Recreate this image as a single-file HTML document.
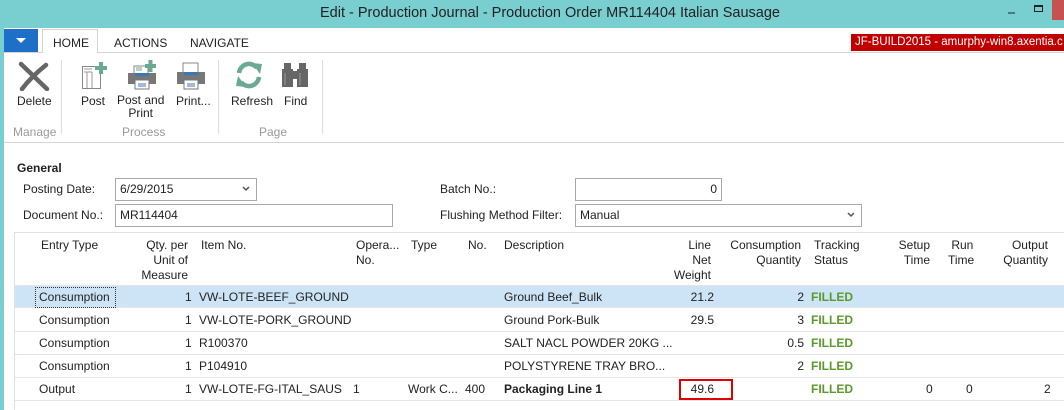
<!DOCTYPE html>
<html><head><style>
*{margin:0;padding:0;box-sizing:border-box}
body{width:1064px;height:410px;overflow:hidden;background:#79cfd0;font-family:"Liberation Sans",sans-serif;font-size:12px;color:#222;position:relative}
.a{position:absolute;white-space:nowrap}
.win{position:absolute;left:4px;top:28px;width:1060px;height:382px;background:#fff}
.inp{position:absolute;border:1px solid #a9a9a9;background:#fff;height:23px;padding:3px 4px;font-size:12px}
.chev{position:absolute;right:6px;top:7px}
.row{position:absolute;left:15px;width:1049px;height:23px;border-bottom:1px solid #e4e4e4}
.g{color:#5a9a2a;font-weight:bold}
.r{text-align:right}
</style></head><body>
<div class="a" style="left:317px;top:5px;width:466px;text-align:center;font-size:14.5px;color:#222">Edit - Production Journal - Production Order MR114404 Italian Sausage</div>
<div class="a" style="left:1008px;top:12px;width:7px;height:2px;background:#4a7b7c"></div>
<div class="a" style="left:1034px;top:5px;width:9px;height:7px;border:1px solid #222;border-top-width:2px"></div>
<div class="a" style="left:1052px;top:0;width:12px;height:20px;background:#c75050"></div>
<div class="win"></div>
<div class="a" style="left:4px;top:29px;width:34px;height:23px;background:#1d6fc8"></div>
<div class="a" style="left:16px;top:38px;width:0;height:0;border-left:5px solid transparent;border-right:5px solid transparent;border-top:5px solid #fff"></div>
<div class="a" style="left:4px;top:52px;width:1060px;height:1px;background:#d4d4d4"></div>
<div class="a" style="left:42px;top:29px;width:56px;height:24px;border:1px solid #d4d4d4;border-bottom:none;background:#fff"></div>
<div class="a" style="left:53px;top:36px;font-size:12px">HOME</div>
<div class="a" style="left:114px;top:36px;font-size:12px">ACTIONS</div>
<div class="a" style="left:190px;top:36px;font-size:12px">NAVIGATE</div>
<div class="a" style="left:851px;top:34px;width:213px;height:17px;background:#c00000;color:#fff;font-size:11.5px;padding:2px 4px;overflow:hidden">JF-BUILD2015 - amurphy-win8.axentia.c</div>
<div class="a" style="left:4px;top:142px;width:1060px;height:1px;background:#d4d4d4"></div>
<div class="a" style="left:61px;top:60px;width:1px;height:74px;background:#ddd"></div>
<div class="a" style="left:218px;top:60px;width:1px;height:74px;background:#ddd"></div>
<div class="a" style="left:322px;top:60px;width:1px;height:74px;background:#ddd"></div>
<svg class="a" style="left:18px;top:61px" width="32" height="30"><path d="M3 3 L29 28 M28 4 C18 12 10 20 4 28" stroke="#666" stroke-width="4.5" fill="none" stroke-linecap="round"/></svg>
<svg class="a" style="left:80px;top:60px" width="30" height="30"><rect x="2.5" y="6.5" width="18" height="22" fill="#fff" stroke="#888"/><path d="M7 12v16M12 12v16M4 9h8M4 12h8" stroke="#9a9a9a"/><rect x="15" y="6" width="12" height="4" fill="#6aaa94"/><rect x="19" y="2" width="4" height="12" fill="#6aaa94"/></svg>
<svg class="a" style="left:126px;top:60px" width="32" height="30"><rect x="8" y="6" width="14" height="8" fill="#fff" stroke="#888"/><path d="M10 8h6M10 10h6" stroke="#6aaa94"/><rect x="2" y="13" width="28" height="11" fill="#777"/><rect x="9" y="13" width="14" height="3" fill="#3a78b5"/><rect x="9" y="20" width="14" height="9" fill="#fff" stroke="#777"/><path d="M12 24h8M12 26h8" stroke="#3a78b5"/><rect x="19" y="4" width="11" height="4" fill="#6aaa94"/><rect x="22.5" y="0" width="4" height="12" fill="#6aaa94"/></svg>
<svg class="a" style="left:175px;top:60px" width="32" height="30"><rect x="8" y="3" width="15" height="10" fill="#fff" stroke="#888"/><rect x="2" y="12" width="28" height="12" fill="#777"/><rect x="9" y="12" width="14" height="3" fill="#3a78b5"/><rect x="9" y="20" width="14" height="9" fill="#fff" stroke="#777"/><path d="M12 24h8M12 26h8" stroke="#3a78b5"/></svg>
<svg class="a" style="left:234px;top:60px" width="30" height="30"><path d="M5 13 A10 10 0 0 1 23 8" stroke="#6aaa94" stroke-width="4.5" fill="none"/><path d="M18 3 L28 4 L26 14 Z" fill="#6aaa94"/><path d="M25 17 A10 10 0 0 1 7 22" stroke="#6aaa94" stroke-width="4.5" fill="none"/><path d="M12 27 L2 26 L4 16 Z" fill="#6aaa94"/></svg>
<svg class="a" style="left:281px;top:61px" width="28" height="28"><rect x="3" y="2" width="7" height="6" fill="#666"/><rect x="18" y="2" width="7" height="6" fill="#666"/><rect x="1" y="8" width="11" height="18" fill="#666"/><rect x="16" y="8" width="11" height="18" fill="#666"/><rect x="11" y="10" width="6" height="8" fill="#666"/><path d="M4 12v12M19 12v12" stroke="#999"/></svg>
<div class="a" style="left:17px;top:94px">Delete</div>
<div class="a" style="left:81px;top:94px">Post</div>
<div class="a" style="left:117px;top:94px;text-align:center;line-height:13px">Post and<br>Print</div>
<div class="a" style="left:176px;top:94px">Print...</div>
<div class="a" style="left:231px;top:94px">Refresh</div>
<div class="a" style="left:284px;top:94px">Find</div>
<div class="a" style="left:13px;top:125px;color:#999">Manage</div>
<div class="a" style="left:122px;top:125px;color:#999">Process</div>
<div class="a" style="left:259px;top:125px;color:#999">Page</div>
<div class="a" style="left:17px;top:161px;font-weight:bold">General</div>
<div class="a" style="left:23px;top:182px">Posting Date:</div>
<div class="a" style="left:23px;top:208px">Document No.:</div>
<div class="inp" style="left:115px;top:178px;width:142px">6/29/2015<svg class="chev" width="8" height="6"><path d="M1 1l3 3 3-3" stroke="#555" stroke-width="1.5" fill="none"/></svg></div>
<div class="inp" style="left:115px;top:204px;width:278px">MR114404</div>
<div class="a" style="left:440px;top:182px">Batch No.:</div>
<div class="a" style="left:440px;top:208px">Flushing Method Filter:</div>
<div class="inp r" style="left:575px;top:178px;width:147px">0</div>
<div class="inp" style="left:575px;top:204px;width:287px">Manual<svg class="chev" width="8" height="6"><path d="M1 1l3 3 3-3" stroke="#555" stroke-width="1.5" fill="none"/></svg></div>
<div class="a" style="left:14px;top:232px;width:1050px;height:178px;border-top:1px solid #e0e0e0;border-left:1px solid #e0e0e0"></div>
<div class="a" style="left:41px;top:238px">Entry Type</div>
<div class="a r" style="left:110px;top:238px;width:78px;line-height:15px">Qty. per<br>Unit of<br>Measure</div>
<div class="a" style="left:201px;top:238px">Item No.</div>
<div class="a" style="left:356px;top:238px;line-height:15px">Opera...<br>No.</div>
<div class="a" style="left:411px;top:238px">Type</div>
<div class="a" style="left:468px;top:238px">No.</div>
<div class="a" style="left:504px;top:238px">Description</div>
<div class="a r" style="left:660px;top:238px;width:51px;line-height:15px">Line<br>Net<br>Weight</div>
<div class="a r" style="left:720px;top:238px;width:81px;line-height:15px">Consumption<br>Quantity</div>
<div class="a" style="left:814px;top:238px;line-height:15px">Tracking<br>Status</div>
<div class="a r" style="left:890px;top:238px;width:40px;line-height:15px">Setup<br>Time</div>
<div class="a" style="left:948px;top:238px;line-height:15px">&nbsp;Run<br>Time</div>
<div class="a r" style="left:990px;top:238px;width:58px;line-height:15px">Output<br>Quantity</div>
<div class="row" style="top:285px;background:#cde4f6;border-top:1px solid #e4e4e4"></div>
<div class="a" style="left:35px;top:287px;width:81px;height:21px;border:1px dotted #333"></div>
<div class="row" style="top:309px"></div>
<div class="row" style="top:332px"></div>
<div class="row" style="top:355px"></div>
<div class="row" style="top:378px"></div>
<div class="a" style="left:39px;top:290px">Consumption</div><div class="a" style="left:185px;top:290px">1</div><div class="a" style="left:199px;top:290px">VW-LOTE-BEEF_GROUND</div><div class="a" style="left:504px;top:290px">Ground Beef_Bulk</div><div class="a r" style="left:670px;top:290px;width:44px">21.2</div><div class="a r" style="left:760px;top:290px;width:44px">2</div><div class="a g" style="left:811px;top:290px">FILLED</div>
<div class="a" style="left:39px;top:313px">Consumption</div><div class="a" style="left:185px;top:313px">1</div><div class="a" style="left:199px;top:313px">VW-LOTE-PORK_GROUND</div><div class="a" style="left:504px;top:313px">Ground Pork-Bulk</div><div class="a r" style="left:670px;top:313px;width:44px">29.5</div><div class="a r" style="left:760px;top:313px;width:44px">3</div><div class="a g" style="left:811px;top:313px">FILLED</div>
<div class="a" style="left:39px;top:336px">Consumption</div><div class="a" style="left:185px;top:336px">1</div><div class="a" style="left:199px;top:336px">R100370</div><div class="a" style="left:504px;top:336px">SALT NACL POWDER 20KG ...</div><div class="a r" style="left:760px;top:336px;width:44px">0.5</div><div class="a g" style="left:811px;top:336px">FILLED</div>
<div class="a" style="left:39px;top:359px">Consumption</div><div class="a" style="left:185px;top:359px">1</div><div class="a" style="left:199px;top:359px">P104910</div><div class="a" style="left:504px;top:359px">POLYSTYRENE TRAY BRO...</div><div class="a r" style="left:760px;top:359px;width:44px">2</div><div class="a g" style="left:811px;top:359px">FILLED</div>
<div class="a" style="left:39px;top:382px">Output</div><div class="a" style="left:185px;top:382px">1</div><div class="a" style="left:199px;top:382px">VW-LOTE-FG-ITAL_SAUS</div><div class="a" style="left:353px;top:382px">1</div><div class="a" style="left:408px;top:382px">Work C...</div><div class="a" style="left:465px;top:382px">400</div><div class="a" style="left:504px;top:382px;font-weight:bold">Packaging Line 1</div>
<div class="a" style="left:679px;top:379px;width:54px;height:21px;border:2px solid #e00000"></div>
<div class="a r" style="left:670px;top:382px;width:44px">49.6</div>
<div class="a g" style="left:811px;top:382px">FILLED</div><div class="a" style="left:926px;top:382px">0</div><div class="a" style="left:966px;top:382px">0</div><div class="a" style="left:1044px;top:382px">2</div>
</body></html>
